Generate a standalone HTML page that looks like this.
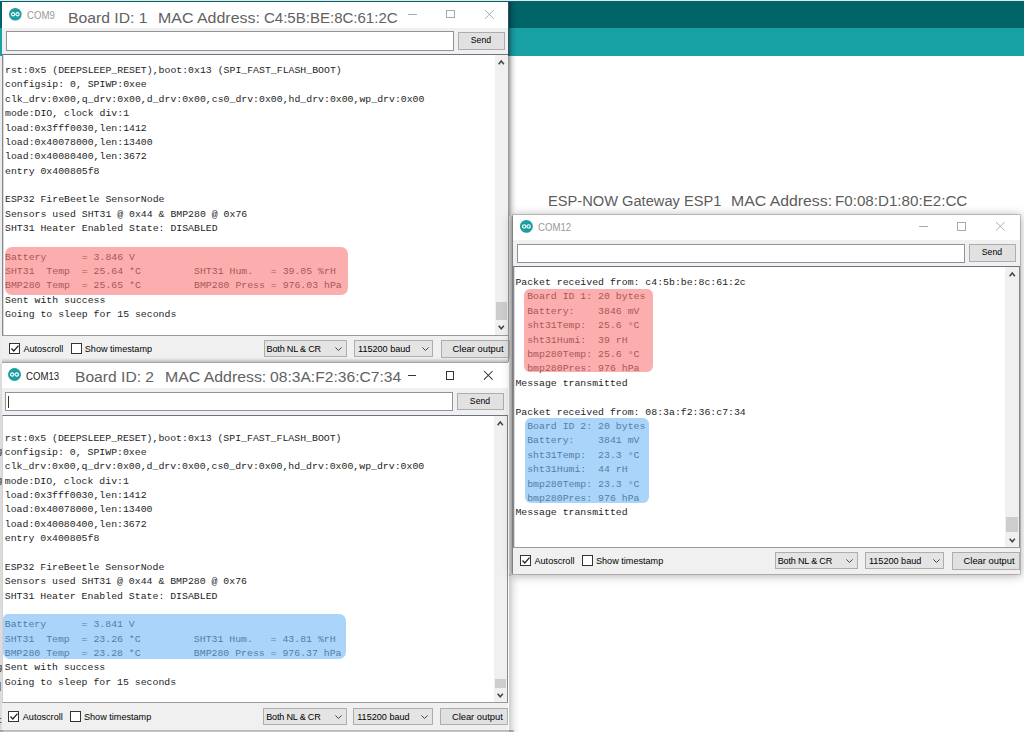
<!DOCTYPE html>
<html lang="en">
<head>
<meta charset="utf-8">
<title>ESP-NOW serial monitors</title>
<style>
html,body{margin:0;padding:0;}
body{width:1024px;height:732px;overflow:hidden;background:#fff;position:relative;
  font-family:"Liberation Sans",sans-serif;}
.abs{position:absolute;}
#toprow{left:0;top:0;width:1024px;height:1px;background:#dfe9e9;}
#dark{left:0;top:1px;width:1024px;height:27px;background:#006468;}
#teal{left:0;top:28px;width:1024px;height:27.6px;background:#17a1a5;}

.win{position:absolute;background:#f0f0f0;}
.title{position:absolute;left:0;top:0;right:0;background:#fff;}
.com{position:absolute;font-size:10.7px;line-height:12px;white-space:pre;color:#9a9a9a;transform:scaleX(.9);transform-origin:0 0;}
.big{position:absolute;white-space:pre;color:#595959;line-height:18px;font-size:15.2px;transform-origin:0 0;}
.inp{position:absolute;background:#fff;border:1px solid #939393;box-sizing:border-box;}
.btn{position:absolute;background:#e1e1e1;border:1px solid #adadad;box-sizing:border-box;
  font-size:8.7px;color:#000;text-align:center;white-space:pre;text-indent:-1px;}
.ta{position:absolute;background:#fff;box-sizing:border-box;border:1px solid #828790;overflow:hidden;box-shadow:inset 1px 0 0 rgba(130,135,144,.3);}
.sb{position:absolute;top:0;bottom:0;right:0;background:#f0f0f0;}
.thumb{position:absolute;left:1px;right:1px;background:#cdcdcd;}
pre{position:absolute;margin:0;font-family:"Liberation Mono",monospace;font-size:9.86px;
  line-height:14.36px;color:#1e1e1e;white-space:pre;}
.hl{position:absolute;border-radius:7px;}
.red{background:rgba(250,120,120,.6);}
.blue{background:rgba(113,183,247,.6);}
.ft{position:absolute;font-size:9.1px;line-height:12px;color:#000;white-space:pre;}
.cb{position:absolute;width:11px;height:11px;box-sizing:border-box;border:1px solid #333;background:#fff;}
.dd{position:absolute;background:#e4e4e4;border:1px solid #adadad;box-sizing:border-box;}
svg{position:absolute;overflow:visible;}
</style>
</head>
<body>
<div id="toprow" class="abs"></div>
<div id="dark" class="abs"></div>
<div id="teal" class="abs"></div>

<!-- shadow of left windows on the right side -->
<div class="abs" style="left:508.6px;top:2px;width:8px;height:574px;background:linear-gradient(90deg,rgba(0,0,0,.36),rgba(0,0,0,.13) 38%,rgba(0,0,0,.03) 75%,rgba(0,0,0,0));"></div>
<div class="abs" style="left:508.6px;top:576px;width:11px;height:156px;background:linear-gradient(90deg,rgba(0,0,0,.2),rgba(0,0,0,.09) 35%,rgba(0,0,0,.02) 75%,rgba(0,0,0,0));"></div>
<div class="abs" style="left:509px;top:216px;width:4px;height:358px;background:linear-gradient(90deg,#d6d6d6,#b6b6b6);"></div>
<!-- left sliver -->
<div class="abs" style="left:0;top:55.6px;width:2px;height:307px;background:#ececec;"></div>

<!-- ================= WINDOW 1 (COM9) ================= -->
<div class="win" id="w1" style="left:2px;top:2px;width:507.1px;height:360.4px;">
  <div class="title" style="height:26.2px;"></div>
  <svg style="left:7.4px;top:5.9px;" width="12.6" height="12.6" viewBox="0 0 24 24">
    <circle cx="12" cy="12" r="12" fill="#1b9da1"/>
    <circle cx="7.8" cy="12" r="3.1" fill="none" stroke="#fff" stroke-width="2.1"/>
    <circle cx="16.2" cy="12" r="3.1" fill="none" stroke="#fff" stroke-width="2.1"/>
  </svg>
  <div class="com" style="left:25.4px;top:7px;">COM9</div>
  <!-- controls -->
  <div class="abs" style="left:406.4px;top:11.6px;width:8.5px;height:1px;background:#aaa;"></div>
  <div class="abs" style="left:444.1px;top:7.8px;width:8.6px;height:8.6px;box-sizing:border-box;border:1px solid #aaa;"></div>
  <svg style="left:483.3px;top:7.8px;" width="8.8" height="8.8" viewBox="0 0 10 10"><path d="M0 0L10 10M10 0L0 10" stroke="#aaa" stroke-width="1.1" fill="none"/></svg>

  <div class="inp" style="left:4px;top:29px;width:447.6px;height:19.6px;"></div>
  <div class="btn" style="left:456.2px;top:30.1px;width:46.6px;height:17.5px;line-height:15.5px;">Send</div>

  <div class="ta" style="left:0;top:52.2px;width:507.1px;height:281.6px;border-color:#6f7285 #828790 #9a9a9a #828790;">
    <div class="sb" style="width:13.5px;">
      <svg style="left:3px;top:5px;" width="6.5" height="4.9" viewBox="0 0 8 6"><path d="M0.8 5.2L4 1.3L7.2 5.2" stroke="#454545" stroke-width="1.9" fill="none"/></svg>
      <div class="thumb" style="top:246.5px;height:18px;"></div>
      <svg style="left:3.4px;top:270.2px;" width="6.5" height="4.9" viewBox="0 0 8 6"><path d="M0.8 0.8L4 4.7L7.2 0.8" stroke="#454545" stroke-width="1.9" fill="none"/></svg>
    </div>
<pre style="left:2.0px;top:8.9px;">rst:0x5 (DEEPSLEEP_RESET),boot:0x13 (SPI_FAST_FLASH_BOOT)
configsip: 0, SPIWP:0xee
clk_drv:0x00,q_drv:0x00,d_drv:0x00,cs0_drv:0x00,hd_drv:0x00,wp_drv:0x00
mode:DIO, clock div:1
load:0x3fff0030,len:1412
load:0x40078000,len:13400
load:0x40080400,len:3672
entry 0x400805f8

ESP32 FireBeetle SensorNode
Sensors used SHT31 @ 0x44 &amp; BMP280 @ 0x76
SHT31 Heater Enabled State: DISABLED

Battery      = 3.846 V
SHT31  Temp  = 25.64 *C         SHT31 Hum.   = 39.05 %rH
BMP280 Temp  = 25.65 *C         BMP280 Press = 976.03 hPa
Sent with success
Going to sleep for 15 seconds</pre>
    <div class="hl red" style="left:1.9px;top:191.8px;width:342.8px;height:47.6px;"></div>
  </div>

  <!-- footer -->
  <div class="cb" style="left:7px;top:341px;"></div>
  <svg style="left:8.6px;top:343.2px;" width="8" height="7" viewBox="0 0 8 7"><path d="M0.5 3.5L2.8 6L7.5 0.6" stroke="#222" stroke-width="1.3" fill="none"/></svg>
  <div class="ft" style="left:21.4px;top:340.6px;">Autoscroll</div>
  <div class="cb" style="left:69px;top:341px;"></div>
  <div class="ft" style="left:82.8px;top:340.6px;">Show timestamp</div>
  <div class="dd" style="left:261.6px;top:338.3px;width:83.4px;height:17.2px;"></div>
  <div class="ft" style="left:264.6px;top:340.6px;letter-spacing:-.2px;">Both NL &amp; CR</div>
  <svg style="left:333px;top:344.6px;" width="7" height="4" viewBox="0 0 7 4"><path d="M0.4 0.4L3.5 3.5L6.6 0.4" stroke="#444" stroke-width="1" fill="none"/></svg>
  <div class="dd" style="left:352px;top:338.3px;width:79.4px;height:17.2px;"></div>
  <div class="ft" style="left:356px;top:340.6px;">115200 baud</div>
  <svg style="left:420px;top:344.6px;" width="7" height="4" viewBox="0 0 7 4"><path d="M0.4 0.4L3.5 3.5L6.6 0.4" stroke="#444" stroke-width="1" fill="none"/></svg>
  <div class="btn" style="left:439px;top:338.3px;width:68.5px;height:17.3px;line-height:16.6px;font-size:9.35px;text-align:left;padding-left:11.6px;">Clear output</div>
  <div class="abs" style="left:0;right:0;bottom:0;height:4px;background:linear-gradient(180deg,rgba(0,0,0,0),rgba(0,0,0,.2));"></div>
  <!-- right edge border -->
  <div class="abs" style="right:0;top:0;width:1px;height:53.6px;background:#3b4a63;"></div>
  <div class="abs" style="right:0;top:53.6px;width:1px;bottom:0;background:#9a9a9a;"></div>
</div>

<!-- ================= WINDOW 2 (COM13) ================= -->
<div class="abs" id="sliver2" style="left:0;top:363px;width:2.6px;height:369px;background:#dcdcdc;overflow:hidden;font-family:'Liberation Mono',monospace;font-size:9.86px;line-height:12px;color:#333;">
  <span class="abs" style="right:.2px;top:83.4px;">g</span><span class="abs" style="right:.2px;top:112.1px;">g</span><span class="abs" style="right:.2px;top:298.6px;">g</span><span class="abs" style="right:.2px;top:318px;">]</span><span class="abs" style="right:.2px;top:352px;">t</span>
</div>
<div class="win" id="w2" style="left:2px;top:362px;width:506.4px;height:367.6px;border-top:1px solid #a4a4a4;box-sizing:border-box;">
  <div class="title" style="height:25.4px;"></div>
  <svg style="left:6.2px;top:5.4px;" width="13" height="13" viewBox="0 0 24 24">
    <circle cx="12" cy="12" r="12" fill="#1b9da1"/>
    <circle cx="7.8" cy="12" r="3.1" fill="none" stroke="#fff" stroke-width="2.1"/>
    <circle cx="16.2" cy="12" r="3.1" fill="none" stroke="#fff" stroke-width="2.1"/>
  </svg>
  <div class="com" style="left:24.4px;top:7px;color:#222;">COM13</div>
  <div class="abs" style="left:405.9px;top:12.2px;width:8px;height:1.1px;background:#333;"></div>
  <div class="abs" style="left:443.8px;top:8.1px;width:8.4px;height:8.6px;box-sizing:border-box;border:1px solid #333;"></div>
  <svg style="left:482.1px;top:7.9px;" width="8.6" height="8.6" viewBox="0 0 10 10"><path d="M0 0L10 10M10 0L0 10" stroke="#333" stroke-width="1.2" fill="none"/></svg>

  <div class="inp" style="left:3.2px;top:29px;width:447.6px;height:19.4px;"></div>
  <div class="abs" style="left:5.8px;top:32.6px;width:1px;height:12px;background:#333;"></div>
  <div class="btn" style="left:455.3px;top:30.2px;width:46.4px;height:16.8px;line-height:14.8px;">Send</div>

  <div class="ta" style="left:0;top:51.6px;width:506.4px;height:288.4px;border-color:#6f7285 #828790 #9a9a9a #d2d2d2;box-shadow:none;">
    <div class="sb" style="width:13.4px;">
      <svg style="left:3.4px;top:5.4px;" width="6.5" height="4.9" viewBox="0 0 8 6"><path d="M0.8 5.2L4 1.3L7.2 5.2" stroke="#454545" stroke-width="1.9" fill="none"/></svg>
      <div class="thumb" style="top:263px;height:9.4px;"></div>
      <svg style="left:3.4px;top:277.6px;" width="6.5" height="4.9" viewBox="0 0 8 6"><path d="M0.8 0.8L4 4.7L7.2 0.8" stroke="#454545" stroke-width="1.9" fill="none"/></svg>
    </div>
<pre style="left:1.8px;top:1.6px;">

rst:0x5 (DEEPSLEEP_RESET),boot:0x13 (SPI_FAST_FLASH_BOOT)
configsip: 0, SPIWP:0xee
clk_drv:0x00,q_drv:0x00,d_drv:0x00,cs0_drv:0x00,hd_drv:0x00,wp_drv:0x00
mode:DIO, clock div:1
load:0x3fff0030,len:1412
load:0x40078000,len:13400
load:0x40080400,len:3672
entry 0x400805f8

ESP32 FireBeetle SensorNode
Sensors used SHT31 @ 0x44 &amp; BMP280 @ 0x76
SHT31 Heater Enabled State: DISABLED

Battery      = 3.841 V
SHT31  Temp  = 23.26 *C         SHT31 Hum.   = 43.81 %rH
BMP280 Temp  = 23.28 *C         BMP280 Press = 976.37 hPa
Sent with success
Going to sleep for 15 seconds</pre>
    <div class="hl blue" style="left:0px;top:198.0px;width:342.6px;height:45.8px;border-radius:5px 7px 7px 7px;"></div>
  </div>

  <div class="cb" style="left:6.2px;top:348px;"></div>
  <svg style="left:7.8px;top:350.2px;" width="8" height="7" viewBox="0 0 8 7"><path d="M0.5 3.5L2.8 6L7.5 0.6" stroke="#222" stroke-width="1.3" fill="none"/></svg>
  <div class="ft" style="left:20.8px;top:347.7px;">Autoscroll</div>
  <div class="cb" style="left:68.2px;top:348px;"></div>
  <div class="ft" style="left:82px;top:347.7px;">Show timestamp</div>
  <div class="dd" style="left:261.2px;top:345.1px;width:83.4px;height:17.2px;"></div>
  <div class="ft" style="left:264.2px;top:347.6px;letter-spacing:-.2px;">Both NL &amp; CR</div>
  <svg style="left:332.6px;top:351.6px;" width="7" height="4" viewBox="0 0 7 4"><path d="M0.4 0.4L3.5 3.5L6.6 0.4" stroke="#444" stroke-width="1" fill="none"/></svg>
  <div class="dd" style="left:351.2px;top:345.1px;width:79.4px;height:17.2px;"></div>
  <div class="ft" style="left:355.2px;top:347.6px;">115200 baud</div>
  <svg style="left:419.4px;top:351.6px;" width="7" height="4" viewBox="0 0 7 4"><path d="M0.4 0.4L3.5 3.5L6.6 0.4" stroke="#444" stroke-width="1" fill="none"/></svg>
  <div class="btn" style="left:438.3px;top:345.1px;width:68.1px;height:17.3px;line-height:16.6px;font-size:9.35px;text-align:left;padding-left:11.6px;">Clear output</div>
</div>
<!-- bottom shadow under window 2 -->
<div class="abs" style="left:0;top:729.6px;width:514px;height:3px;background:linear-gradient(180deg,rgba(0,0,0,.30),rgba(0,0,0,.16));"></div>

<!-- ================= label + WINDOW 3 (COM12) ================= -->

<div class="win" id="w3" style="left:513px;top:214.6px;width:507.4px;height:359.4px;box-shadow:0 0 0 .8px rgba(0,0,0,.22),0 1px 9px 1px rgba(0,0,0,.30);">
  <div class="title" style="height:25.6px;"></div>
  <svg style="left:7.3px;top:5.6px;" width="12.8" height="12.8" viewBox="0 0 24 24">
    <circle cx="12" cy="12" r="12" fill="#1b9da1"/>
    <circle cx="7.8" cy="12" r="3.1" fill="none" stroke="#fff" stroke-width="2.1"/>
    <circle cx="16.2" cy="12" r="3.1" fill="none" stroke="#fff" stroke-width="2.1"/>
  </svg>
  <div class="com" style="left:25.2px;top:6.4px;">COM12</div>
  <div class="abs" style="left:406px;top:11.8px;width:8.6px;height:1px;background:#aaa;"></div>
  <div class="abs" style="left:444.1px;top:7.9px;width:8.8px;height:8.4px;box-sizing:border-box;border:1px solid #aaa;"></div>
  <svg style="left:483.2px;top:7.9px;" width="8.7" height="8.6" viewBox="0 0 10 10"><path d="M0 0L10 10M10 0L0 10" stroke="#aaa" stroke-width="1.1" fill="none"/></svg>

  <div class="inp" style="left:3.8px;top:29.3px;width:448px;height:18.7px;"></div>
  <div class="btn" style="left:456.2px;top:29.7px;width:46.5px;height:17.3px;line-height:15.3px;">Send</div>

  <div class="ta" style="left:0;top:51.4px;width:507.4px;height:281.6px;border-color:#6f7285 #828790 #9a9a9a #828790;">
    <div class="sb" style="width:14px;">
      <svg style="left:3.9px;top:5.4px;" width="6.5" height="4.9" viewBox="0 0 8 6"><path d="M0.8 5.2L4 1.3L7.2 5.2" stroke="#454545" stroke-width="1.9" fill="none"/></svg>
      <div class="thumb" style="top:250.5px;height:14.7px;"></div>
      <svg style="left:3.9px;top:271.2px;" width="6.5" height="4.9" viewBox="0 0 8 6"><path d="M0.8 0.8L4 4.7L7.2 0.8" stroke="#454545" stroke-width="1.9" fill="none"/></svg>
    </div>
<pre style="left:1.4px;top:9.0px;line-height:14.41px;">Packet received from: c4:5b:be:8c:61:2c
  Board ID 1: 20 bytes
  Battery:    3846 mV
  sht31Temp:  25.6 °C
  sht31Humi:  39 rH
  bmp280Temp: 25.6 °C
  bmp280Pres: 976 hPa
Message transmitted

Packet received from: 08:3a:f2:36:c7:34
  Board ID 2: 20 bytes
  Battery:    3841 mV
  sht31Temp:  23.3 °C
  sht31Humi:  44 rH
  bmp280Temp: 23.3 °C
  bmp280Pres: 976 hPa
Message transmitted</pre>
    <div class="hl red" style="left:9.9px;top:21.7px;width:129.2px;height:83.4px;border-radius:6px;"></div>
    <div class="hl blue" style="left:10.6px;top:151.2px;width:124.4px;height:85px;border-radius:6px;"></div>
  </div>

  <div class="cb" style="left:7px;top:340.5px;"></div>
  <svg style="left:8.6px;top:342.7px;" width="8" height="7" viewBox="0 0 8 7"><path d="M0.5 3.5L2.8 6L7.5 0.6" stroke="#222" stroke-width="1.3" fill="none"/></svg>
  <div class="ft" style="left:21.5px;top:340px;">Autoscroll</div>
  <div class="cb" style="left:68.9px;top:340.5px;"></div>
  <div class="ft" style="left:83px;top:340px;">Show timestamp</div>
  <div class="dd" style="left:261.7px;top:337.7px;width:83.4px;height:17.1px;"></div>
  <div class="ft" style="left:264.7px;top:340px;letter-spacing:-.2px;">Both NL &amp; CR</div>
  <svg style="left:333.1px;top:344px;" width="7" height="4" viewBox="0 0 7 4"><path d="M0.4 0.4L3.5 3.5L6.6 0.4" stroke="#444" stroke-width="1" fill="none"/></svg>
  <div class="dd" style="left:351.9px;top:337.7px;width:79.4px;height:17.1px;"></div>
  <div class="ft" style="left:355.9px;top:340px;">115200 baud</div>
  <svg style="left:420px;top:344px;" width="7" height="4" viewBox="0 0 7 4"><path d="M0.4 0.4L3.5 3.5L6.6 0.4" stroke="#444" stroke-width="1" fill="none"/></svg>
  <div class="btn" style="left:439px;top:337.7px;width:68.4px;height:17.3px;line-height:16.4px;font-size:9.35px;text-align:left;padding-left:11.6px;">Clear output</div>
</div>

<!-- overlay labels -->
<div class="big" id="t1a" style="left:67.80px;top:9.1px;transform:scaleX(1.0350);color:#626262;">Board ID: 1</div>
<div class="big" id="t1b" style="left:158.35px;top:9.1px;transform:scaleX(1.0500);color:#626262;">MAC Address:</div>
<div class="big" id="t1c" style="left:263.70px;top:9.1px;transform:scaleX(0.9890);color:#626262;">C4:5B:BE:8C:61:2C</div>
<div class="big" id="t2a" style="left:74.60px;top:368.0px;transform:scaleX(1.0290);color:#626262;">Board ID: 2</div>
<div class="big" id="t2b" style="left:165.36px;top:368.0px;transform:scaleX(1.0430);color:#626262;">MAC Address:</div>
<div class="big" id="t2c" style="left:270.00px;top:368.0px;transform:scaleX(1.0290);color:#626262;">08:3A:F2:36:C7:34</div>
<div class="big" id="t3a" style="left:547.80px;top:192.0px;transform:scaleX(0.9646);color:#5c5c5c;">ESP-NOW Gateway ESP1</div>
<div class="big" id="t3b" style="left:730.50px;top:192.0px;transform:scaleX(1.0410);color:#5c5c5c;">MAC Address:</div>
<div class="big" id="t3c" style="left:835.20px;top:192.0px;transform:scaleX(0.9980);color:#5c5c5c;">F0:08:D1:80:E2:CC</div>
</body>
</html>
